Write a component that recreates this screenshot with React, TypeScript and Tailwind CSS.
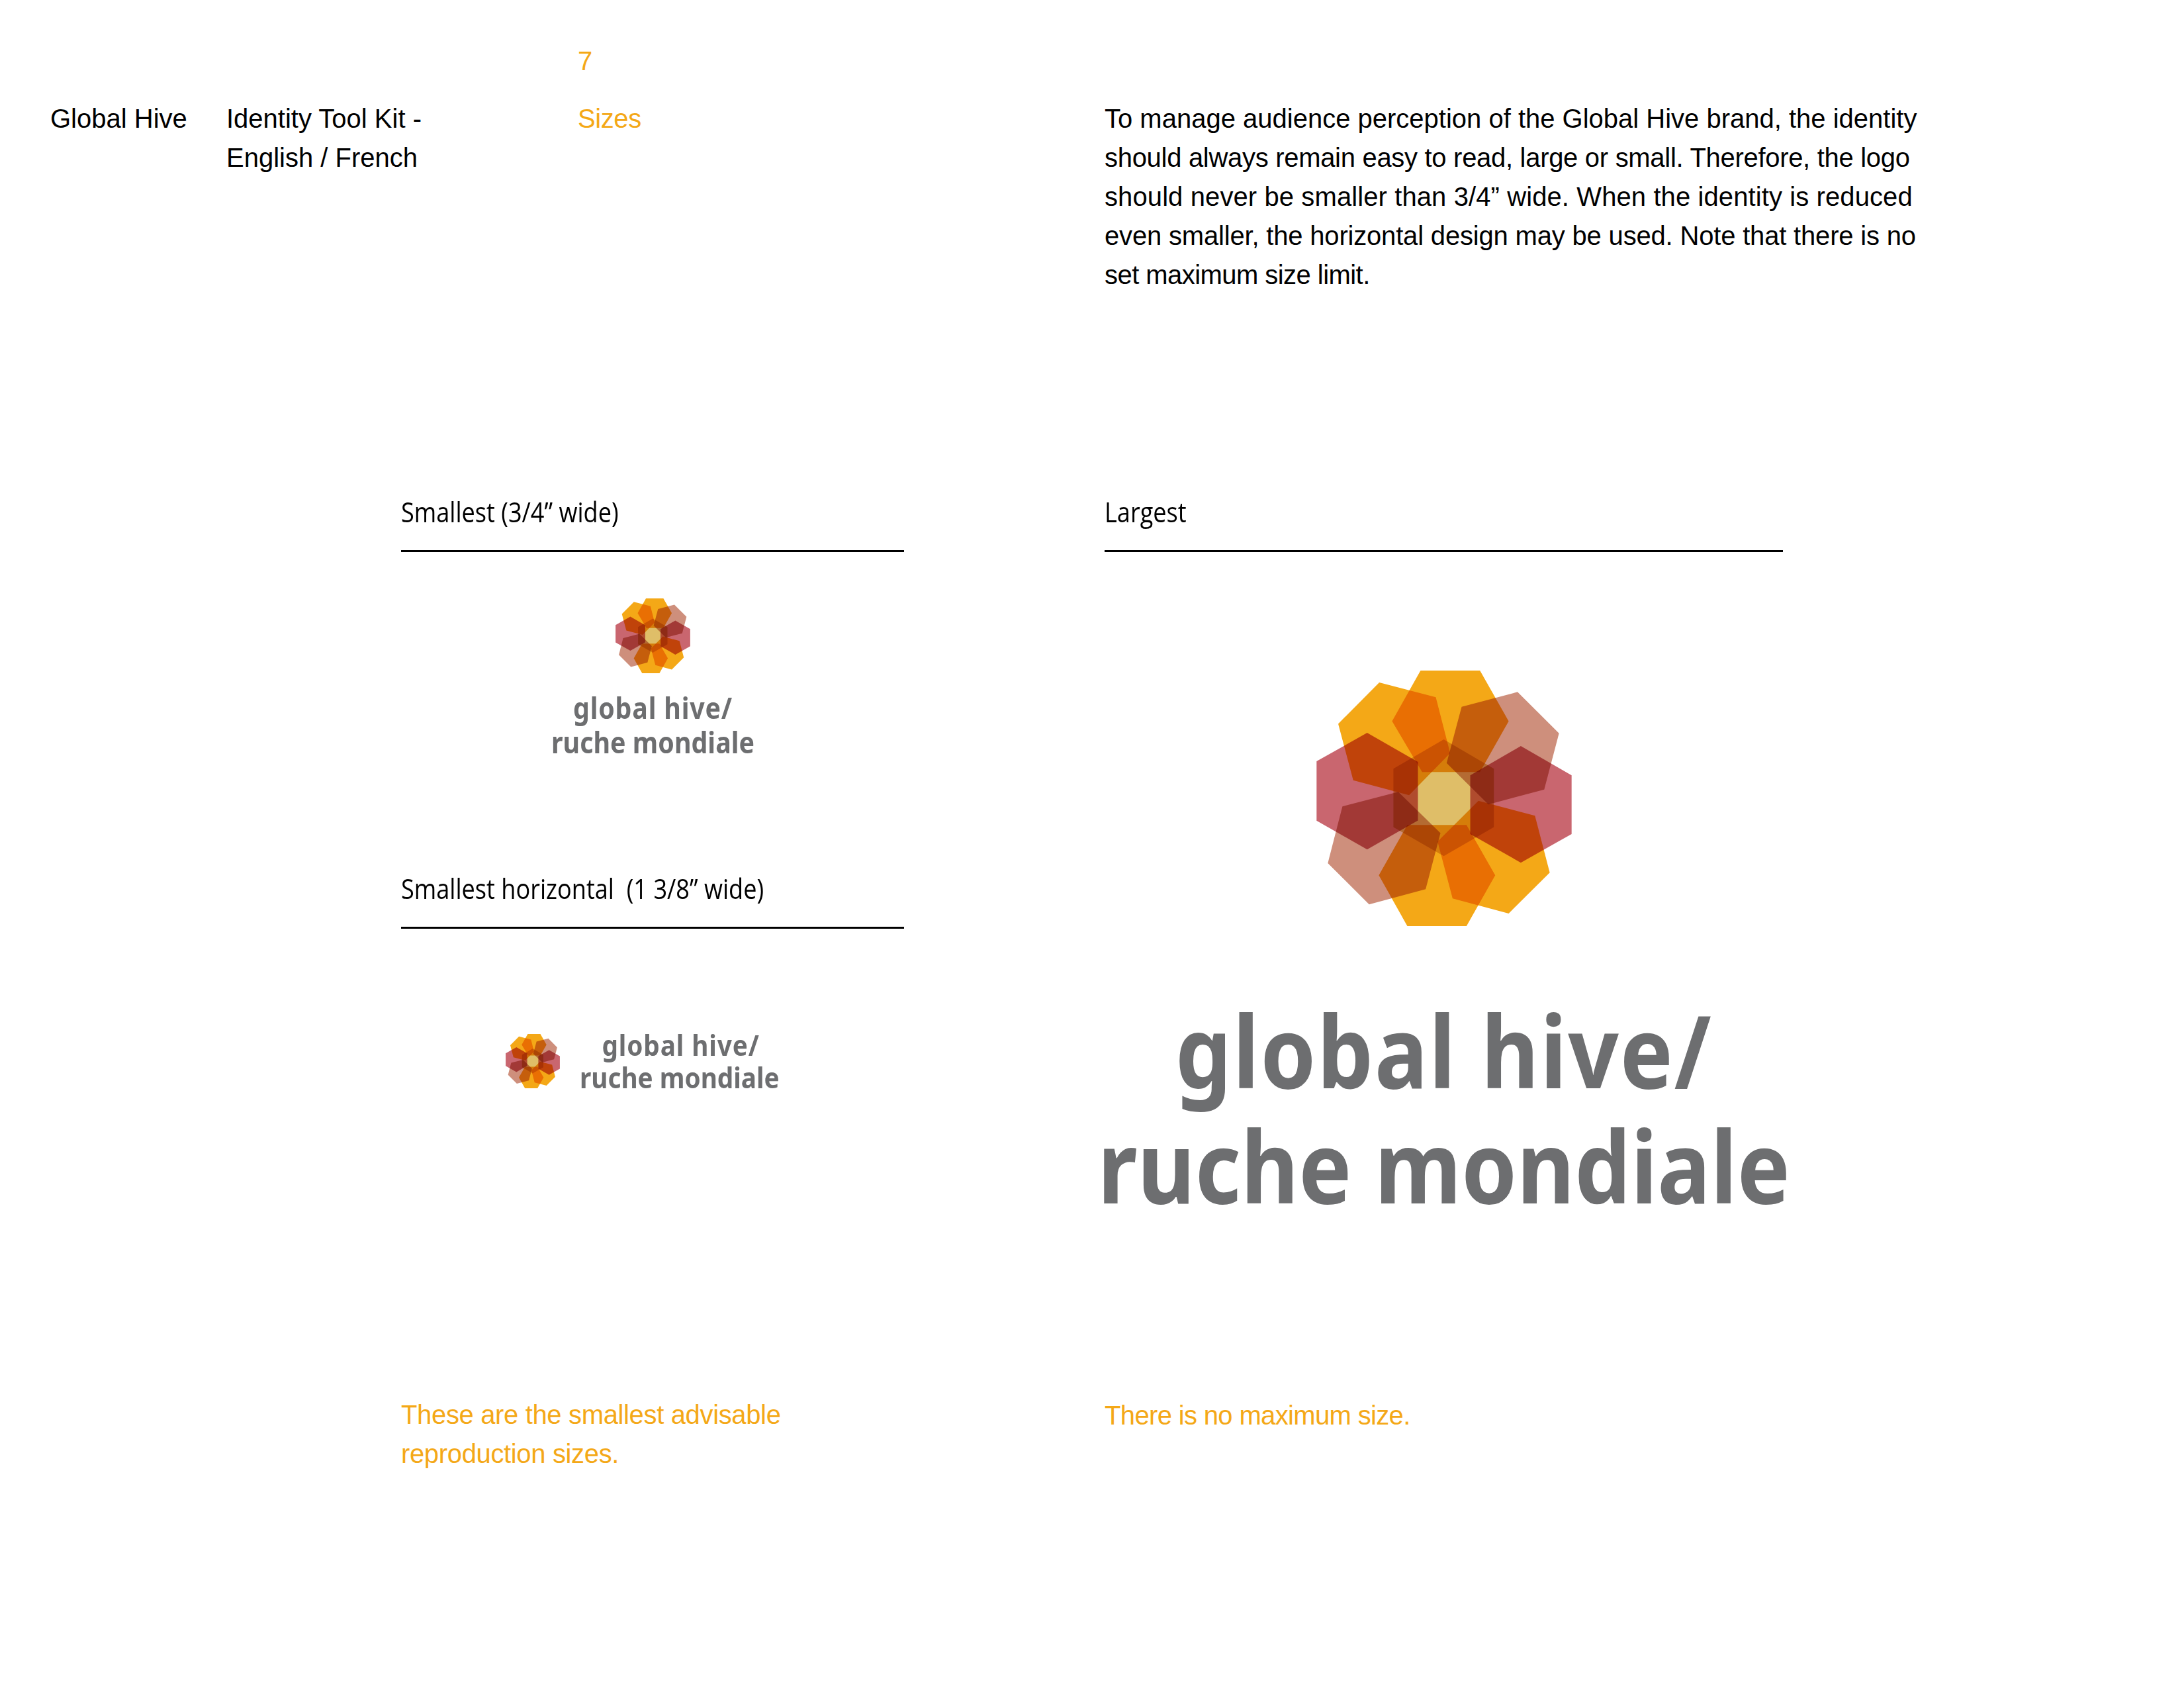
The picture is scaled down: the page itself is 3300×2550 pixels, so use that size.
const orange = "#F4A817";
const rose = "#C9666F";
const clay = "#CE8F7C";

const petals: [string, string][] = [
  ["618,96 887,96 1017,325 887,555 625,555 489,325", orange],
  ["558,1253 826,1253 956,1023 826,795 558,795 429,1023", orange],
  ["431,150 687,217 752,470 566,660 313,593 245,337", orange],
  ["1017,1196 1203,1011 1136,753 880,686 695,870 763,1128", orange],
  ["147,507 147,776 376,906 606,775 606,510 376,378", rose],
  ["1302,570 1302,836 1072,966 843,836 843,570 1072,438", rose],
  ["1057,193 1245,380 1178,635 925,702 736,515 804,260", clay],
  ["385,1155 198,968 264,711 517,645 708,832 641,1086", clay],
  ["723,408 950,540 950,805 723,936 495,805 495,540", "#DFBE68"],
];

function Logo({ className }: { className: string }) {
  return (
    <svg viewBox="147 96 1155 1157" className={`${className} isolate shrink-0`}>
      {petals.map(([points, fill]) => (
        <polygon key={points} points={points} fill={fill} className="mix-blend-multiply" />
      ))}
    </svg>
  );
}

function Heading({ children }: { children: React.ReactNode }) {
  return (
    <div className="h-[133px] border-b-[3px] border-black pt-[42px] text-[42px] leading-[60px] text-black font-['Open_Sans',sans-serif]">
      <span className="inline-block origin-left scale-x-[0.86] whitespace-pre">{children}</span>
    </div>
  );
}

export default function App() {
  return (
    <div className="w-[3300px] h-[2550px] bg-white font-['Liberation_Sans',sans-serif] text-[40px] leading-[59px] text-black overflow-hidden">
      <header className="h-[701px] flex pl-[76px] pt-[63px]">
        <div className="w-[266px] pt-[87px]">Global Hive</div>
        <div className="w-[531px] pt-[87px]">
          Identity Tool Kit -<br />English / French
        </div>
        <div className="w-[796px] text-[#F4A817]">
          <div>7</div>
          <div className="mt-[28px] tracking-[-0.4px]">Sizes</div>
        </div>
        <div className="w-[1300px] pt-[87px] whitespace-nowrap">
          <div>To manage audience perception of the Global Hive brand, the identity</div>
          <div className="tracking-[-0.3px]">should always remain easy to read, large or small. Therefore, the logo</div>
          <div className="tracking-[0.1px]">should never be smaller than 3/4” wide. When the identity is reduced</div>
          <div className="tracking-[-0.18px]">even smaller, the horizontal design may be used. Note that there is no</div>
          <div className="tracking-[-0.55px]">set maximum size limit.</div>
        </div>
      </header>

      <main className="flex pl-[606px]">
        <section className="w-[760px]">
          <Heading>Smallest (3/4” wide)</Heading>
          <div className="mt-[70px] flex flex-col items-center">
            <Logo className="w-[113px] h-[113px]" />
            <div className="mt-[26px] text-center font-['Noto_Sans',sans-serif] font-bold text-[44px] leading-[52px] text-[#6D6E70] whitespace-nowrap scale-x-[0.895]">
              <div className="tracking-[0.9px]">global hive/</div>
              <div>ruche mondiale</div>
            </div>
          </div>
          <div className="mt-[123px]">
            <Heading>Smallest horizontal  (1 3/8” wide)</Heading>
          </div>
          <div className="mt-[151px] pl-[158px] flex items-center gap-[14px]">
            <Logo className="w-[82px] h-[82px]" />
            <div className="w-[320px] text-center font-['Noto_Sans',sans-serif] font-bold text-[43px] leading-[49px] text-[#6D6E70] whitespace-nowrap scale-x-[0.9]">
              <div className="pl-[19px] tracking-[1px]">global hive/</div>
              <div>ruche mondiale</div>
            </div>
          </div>
          <p className="mt-[456px] text-[#F4A817] tracking-[-0.35px]">
            These are the smallest advisable<br />reproduction sizes.
          </p>
        </section>

        <div className="w-[303px]" />

        <section className="w-[1025px]">
          <Heading>Largest</Heading>
          <div className="mt-[179px] flex flex-col items-center">
            <Logo className="w-[386px] h-[386px]" />
            <div className="mt-[100px] text-center font-['Noto_Sans',sans-serif] font-bold text-[150px] leading-[174px] text-[#6D6E70] whitespace-nowrap scale-x-[0.895]">
              <div className="tracking-[2.1px]">global hive/</div>
              <div>ruche mondiale</div>
            </div>
          </div>
          <p className="mt-[262px] text-[#F4A817] tracking-[-0.65px]">There is no maximum size.</p>
        </section>
      </main>
    </div>
  );
}
